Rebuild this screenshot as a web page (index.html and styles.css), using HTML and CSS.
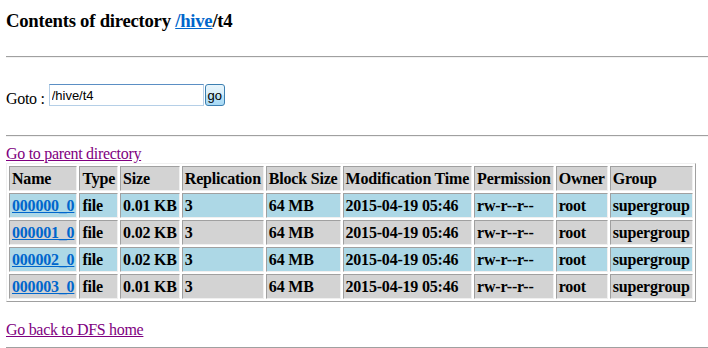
FILE: index.html
```html
<!DOCTYPE html>
<html lang="en">
<head>
    <meta charset="UTF-8">
    <title>HDFS:/hive/t4</title>
    <link rel="stylesheet" href="styles.css">
</head>
<body>
    <h3 class="title">Contents of directory <a href="#" class="link">/hive</a>/t4</h3>
    <hr class="rule rule-top">

    <!-- Goto form -->
    <form class="goto">
        <span class="goto-label">Goto :</span>
        <input class="goto-input" type="text" value="/hive/t4">
        <button class="goto-btn" type="button">go</button>
    </form>
    <hr class="rule">

    <a href="#" class="visited parent">Go to parent directory</a>
    <table class="listing">
        <tr class="head">
            <th>Name</th><th>Type</th><th>Size</th><th>Replication</th><th>Block Size</th><th>Modification Time</th><th>Permission</th><th>Owner</th><th>Group</th>
        </tr>
        <tr class="blue">
            <td><a href="#" class="link">000000_0</a></td><td>file</td><td>0.01 KB</td><td>3</td><td>64 MB</td><td>2015-04-19 05:46</td><td>rw-r--r--</td><td>root</td><td>supergroup</td>
        </tr>
        <tr class="grey">
            <td><a href="#" class="link">000001_0</a></td><td>file</td><td>0.02 KB</td><td>3</td><td>64 MB</td><td>2015-04-19 05:46</td><td>rw-r--r--</td><td>root</td><td>supergroup</td>
        </tr>
        <tr class="blue">
            <td><a href="#" class="link">000002_0</a></td><td>file</td><td>0.02 KB</td><td>3</td><td>64 MB</td><td>2015-04-19 05:46</td><td>rw-r--r--</td><td>root</td><td>supergroup</td>
        </tr>
        <tr class="grey">
            <td><a href="#" class="link">000003_0</a></td><td>file</td><td>0.01 KB</td><td>3</td><td>64 MB</td><td>2015-04-19 05:46</td><td>rw-r--r--</td><td>root</td><td>supergroup</td>
        </tr>
    </table>

    <p class="home"><a href="#" class="visited">Go back to DFS home</a></p>
    <hr class="rule rule-bottom">
</body>
</html>
```

FILE: styles.css
```css
body {
    margin: 0;
    padding-left: 6px;
    font-family: "Liberation Serif", "Times New Roman", serif;
    font-size: 16px;
    line-height: 18px;
    letter-spacing: -0.3px;
    color: #000;
    background: #fff;
}

.title {
    margin: 10px 0 0;
    font-size: 18.72px;
    line-height: 21px;
    letter-spacing: -0.25px;
    font-weight: bold;
}

.link {
    color: #0066cc;
}

.visited {
    color: #800080;
}

/* horizontal rules */
.rule {
    height: 0;
    margin: 8px 0;
    border: 0;
    border-top: 1px solid #a0a0a0;
    border-bottom: 1px solid #f2f2f2;
}

.rule-top {
    margin-top: 25px;
}

.rule-bottom {
    margin-bottom: 0;
}

/* Goto form */
.goto {
    display: flex;
    align-items: flex-start;
    margin: 26px 0 27px;
}

.goto-label {
    margin-top: 6px;
    margin-right: 4px;
}

.goto-input {
    width: 155px;
    height: 22px;
    box-sizing: border-box;
    margin: 0;
    padding: 0 2px;
    border: 1px solid #b5cfe7;
    border-top-color: #5b8fc4;
    font-family: "Liberation Sans", Arial, sans-serif;
    font-size: 13px;
    letter-spacing: 0;
    outline: none;
}

.goto-btn {
    width: 20px;
    height: 22px;
    margin: 0 0 0 1px;
    padding: 0;
    border: 1px solid #3c7fb1;
    border-radius: 3px;
    background: linear-gradient(#e8f5fc, #d6edf9 50%, #bee4f8 51%, #a7d9f5);
    font-family: "Liberation Sans", Arial, sans-serif;
    font-size: 13px;
    letter-spacing: 0;
    color: #000;
}

.parent {
    display: block;
}

/* directory listing */
.listing {
    border-spacing: 2px;
    border: 1px solid;
    border-color: #f0f0f0 #a0a0a0 #a0a0a0 #f0f0f0;
    font-weight: bold;
    letter-spacing: -0.2px;
}

.listing th,
.listing td {
    padding: 3px 2px 2px;
    text-align: left;
    white-space: nowrap;
    border: 1px solid;
    border-color: #a0a0a0 #f0f0f0 #f0f0f0 #a0a0a0;
}

.listing .head th,
.listing .grey td {
    background: #d3d3d3;
}

.listing .blue td {
    background: #add8e6;
}

.home {
    margin: 19px 0 0;
}
```
